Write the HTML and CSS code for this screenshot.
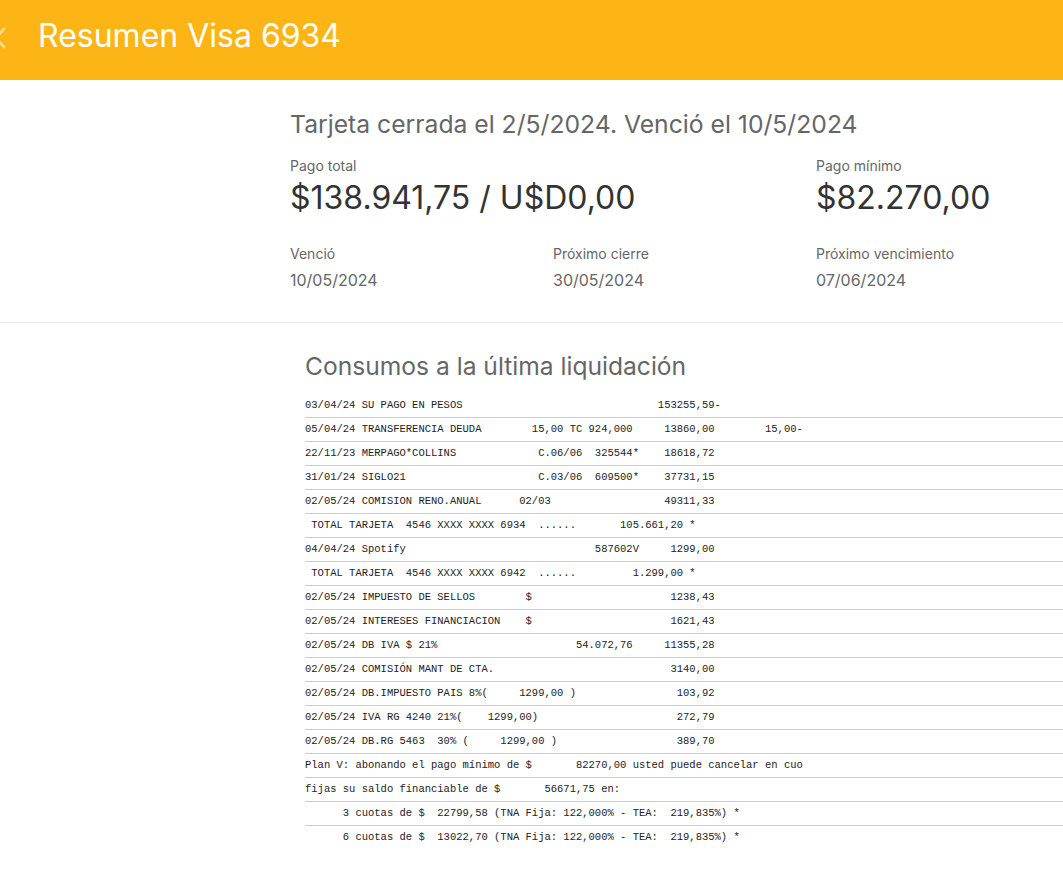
FILE: index.html
```html
<!DOCTYPE html>
<html lang="es">
<head>
<meta charset="utf-8">
<title>Resumen Visa 6934</title>
<link rel="stylesheet" href="styles.css">
</head>
<body>
<header class="topbar">
  <svg class="back" width="14" height="22" viewBox="0 0 14 22" aria-hidden="true"><path d="M11 2 L3 11 L11 20" fill="none" stroke="currentColor" stroke-width="2.6" stroke-linecap="square"/></svg>
  <h1 class="topbar-title">Resumen Visa 6934</h1>
</header>

<section class="summary">
  <h2 class="summary-title">Tarjeta cerrada el 2/5/2024. Venció el 10/5/2024</h2>
  <div class="grid">
    <div class="cell wide">
      <div class="label">Pago total</div>
      <div class="amount">$138.941,75 / U$D0,00</div>
    </div>
    <div class="cell">
      <div class="label">Pago mínimo</div>
      <div class="amount">$82.270,00</div>
    </div>
    <div class="cell">
      <div class="label">Venció</div>
      <div class="date">10/05/2024</div>
    </div>
    <div class="cell">
      <div class="label">Próximo cierre</div>
      <div class="date">30/05/2024</div>
    </div>
    <div class="cell">
      <div class="label">Próximo vencimiento</div>
      <div class="date">07/06/2024</div>
    </div>
  </div>
</section>

<section class="consumos">
  <h2 class="consumos-title">Consumos a la última liquidación</h2>
  <div class="lines">
    <div class="line">03/04/24 SU PAGO EN PESOS                               153255,59-</div>
    <div class="line">05/04/24 TRANSFERENCIA DEUDA        15,00 TC 924,000     13860,00        15,00-</div>
    <div class="line">22/11/23 MERPAGO*COLLINS             C.06/06  325544*    18618,72</div>
    <div class="line">31/01/24 SIGLO21                     C.03/06  609500*    37731,15</div>
    <div class="line">02/05/24 COMISION RENO.ANUAL      02/03                  49311,33</div>
    <div class="line"> TOTAL TARJETA  4546 XXXX XXXX 6934  ......       105.661,20 *</div>
    <div class="line">04/04/24 Spotify                              587602V     1299,00</div>
    <div class="line"> TOTAL TARJETA  4546 XXXX XXXX 6942  ......         1.299,00 *</div>
    <div class="line">02/05/24 IMPUESTO DE SELLOS        $                      1238,43</div>
    <div class="line">02/05/24 INTERESES FINANCIACION    $                      1621,43</div>
    <div class="line">02/05/24 DB IVA $ 21%                      54.072,76     11355,28</div>
    <div class="line">02/05/24 COMISIÓN MANT DE CTA.                            3140,00</div>
    <div class="line">02/05/24 DB.IMPUESTO PAIS 8%(     1299,00 )                103,92</div>
    <div class="line">02/05/24 IVA RG 4240 21%(    1299,00)                      272,79</div>
    <div class="line">02/05/24 DB.RG 5463  30% (     1299,00 )                   389,70</div>
    <div class="line">Plan V: abonando el pago mínimo de $       82270,00 usted puede cancelar en cuo</div>
    <div class="line">fijas su saldo financiable de $       56671,75 en:</div>
    <div class="line">      3 cuotas de $  22799,58 (TNA Fija: 122,000% - TEA:  219,835%) *</div>
    <div class="line">      6 cuotas de $  13022,70 (TNA Fija: 122,000% - TEA:  219,835%) *</div>
  </div>
</section>
</body>
</html>
```
FILE: styles.css
```css
* { box-sizing: border-box; }

html, body {
  margin: 0;
  padding: 0;
  background: #ffffff;
}

body {
  font-family: Inter, "Noto Sans", Roboto, sans-serif;
  color: #333333;
}

.topbar {
  height: 80px;
  background: #fdb515;
  display: flex;
  align-items: center;
  gap: 31px;
  padding-bottom: 9px;
}

.back {
  margin-left: -7px;
  margin-top: 4px;
  color: rgba(255, 255, 255, 0.55);
  flex: none;
}

.topbar-title {
  margin: 0;
  font-size: 32px;
  font-weight: 400;
  color: #ffffff;
  line-height: 38px;
}

.summary {
  padding: 28px 0 0 290px;
  height: 243px;
  border-bottom: 1px solid #e8e8e8;
}

.summary-title {
  margin: 0;
  font-size: 24.7px;
  font-weight: 400;
  line-height: 32px;
  color: #666666;
}

.grid {
  display: grid;
  grid-template-columns: 263px 263px 263px;
  margin-top: 17px;
  row-gap: 27px;
}

.cell.wide {
  grid-column: span 2;
}

.label {
  font-size: 14px;
  line-height: 18px;
  color: #666666;
}

.amount {
  font-size: 32px;
  line-height: 40px;
  color: #333333;
  margin-top: 3px;
}

.date {
  font-size: 16px;
  line-height: 22px;
  color: #666666;
  margin-top: 6px;
}

.consumos {
  padding: 28px 0 30px 305px;
}

.consumos-title {
  margin: 0;
  font-size: 24.6px;
  font-weight: 400;
  line-height: 30px;
  color: #666666;
}

.lines {
  margin-top: 13px;
}

.line {
  font-family: "Liberation Mono", "Courier New", monospace;
  font-size: 10.5px;
  line-height: 23px;
  white-space: pre;
  color: #222222;
  border-bottom: 1px solid #cccccc;
}

.line:last-child {
  border-bottom: none;
}
```
